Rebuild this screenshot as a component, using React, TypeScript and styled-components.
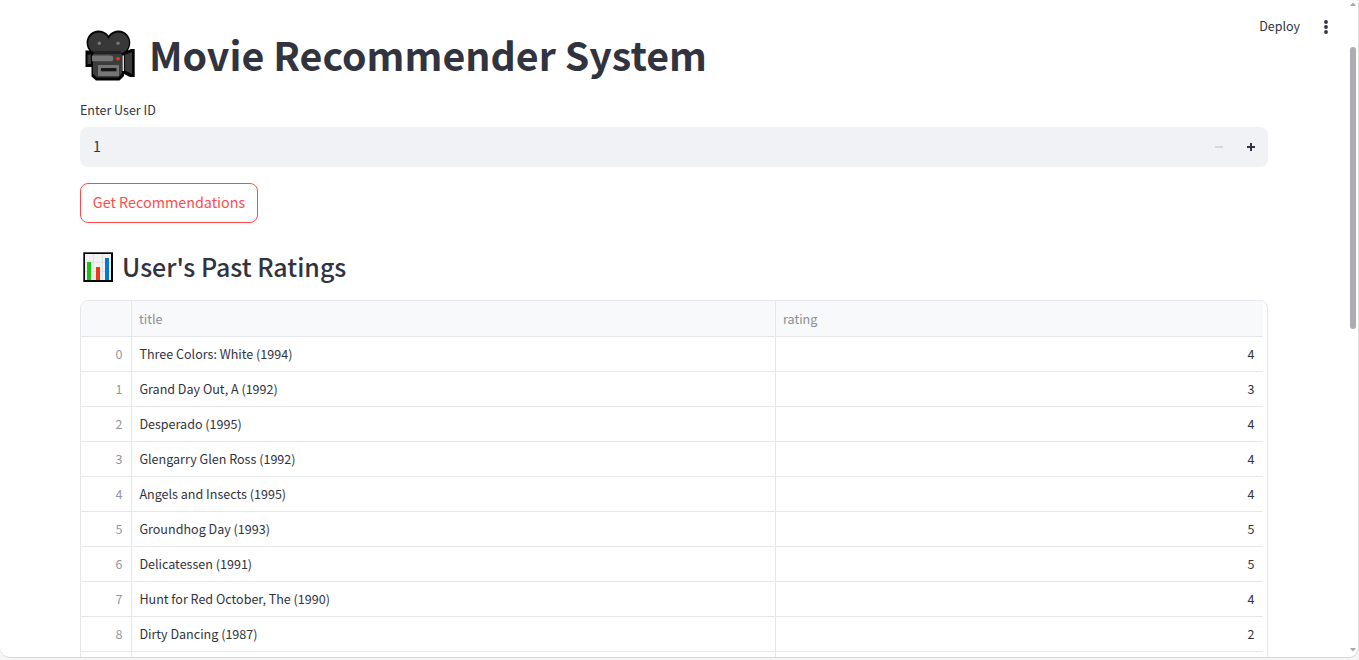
import React from "react";
import styled, { createGlobalStyle } from "styled-components";

const GlobalStyle = createGlobalStyle`
  *, *::before, *::after { box-sizing: border-box; }
  body {
    margin: 0;
    overflow: hidden;
    background: #f5f5f5;
    color: #31333f;
    font-family: "Noto Sans CJK SC", "Noto Sans", sans-serif;
  }
`;

const Frame = styled.div`
  position: relative;
  display: flex;
  justify-content: space-between;
  width: 1359px;
  height: 658px;
  overflow: hidden;
  background: #fff;
  border-right: 1px solid #dcdcdc;
  border-bottom: 1px solid #d6d6d6;
  border-radius: 0 4px 10px 10px;
`;

const Main = styled.main`
  width: 1268px;
  padding: 28px 0 0 80px;
`;

const Title = styled.h1`
  display: flex;
  align-items: center;
  height: 55px;
  margin: 0 0 17px;
  font-size: 39.35px;
  font-weight: 700;
  line-height: 52px;
  white-space: nowrap;
  svg { margin: 0 14px 0 5px; }
  span { padding-bottom: 3px; }
`;

const Label = styled.label`
  display: block;
  height: 27px;
  font-size: 12.5px;
  line-height: 20px;
`;

const NumberField = styled.div`
  display: flex;
  align-items: center;
  height: 40px;
  padding-left: 13px;
  border-radius: 8px;
  background: #f0f2f6;
  font-size: 14.2px;
  line-height: 20px;
  span { flex: 1; padding-bottom: 2px; }
`;

const StepButton = styled.button<{ $muted?: boolean }>`
  display: flex;
  align-items: center;
  justify-content: center;
  width: 32px;
  height: 40px;
  padding: 0;
  border: 0;
  background: none;
  color: ${(p) => (p.$muted ? "#d3d9e1" : "#31333f")};
  &:last-child { margin-right: 1px; }
`;

const ActionButton = styled.button`
  display: block;
  width: 178px;
  height: 40px;
  margin: 16px 0 17px;
  padding: 0 0 2px;
  border: 1px solid #ff4b4b;
  border-radius: 8px;
  background: #fff;
  color: #ff4b4b;
  font: 14.35px/36px "Noto Sans CJK SC", "Noto Sans", sans-serif;
  white-space: nowrap;
`;

const Subtitle = styled.h2`
  display: flex;
  align-items: center;
  height: 54px;
  margin: 0 0 6px;
  font-size: 24.95px;
  font-weight: 500;
  line-height: 52px;
  white-space: nowrap;
  svg { margin: 0 9px 0 3px; }
  span { padding-bottom: 2px; }
`;

const TableBox = styled.div`
  height: 400px;
  padding-right: 4px;
  overflow: hidden;
  border: 1px solid #e6e7ea;
  border-radius: 8px;
`;

const Cell = styled.div<{ $right?: boolean; $faded?: boolean }>`
  padding: 0 8.6px 0 7.4px;
  border-right: 1px solid #e6e7ea;
  text-align: ${(p) => (p.$right ? "right" : "left")};
  ${(p) => p.$faded && "color: #94969f;"}
  white-space: nowrap;
  &:last-child { border-right: 0; }
`;

const Row = styled.div<{ $head?: boolean }>`
  display: grid;
  grid-template-columns: 51px 644px 1fr;
  height: ${(p) => (p.$head ? 36 : 35)}px;
  border-bottom: 1px solid #e6e7ea;
  background: ${(p) => (p.$head ? "#f8f9fb" : "#fff")};
  color: ${(p) => (p.$head ? "#8b8d98" : "#31333f")};
  font-size: 12.55px;
  line-height: ${(p) => (p.$head ? 36 : 34)}px;
  ${Cell} { ${(p) => p.$head && "padding-left: 7px;"} }
`;

const Toolbar = styled.header`
  position: absolute;
  top: 12px;
  right: 24px;
  display: flex;
  align-items: center;
  gap: 18px;
  height: 30px;
  font-size: 12.5px;
  line-height: 28px;
  span { padding-bottom: 2px; }
`;

const Scrollbar = styled.div`
  display: flex;
  flex-direction: column;
  align-items: center;
  width: 8px;
  margin-right: 1px;
  padding: 2px 0 5px;
`;

const Thumb = styled.div`
  width: 6px;
  height: 282px;
  margin: 41px 0 auto;
  border-radius: 3px;
  background: #acacb2;
`;

const CameraIcon = () => (
  <svg width="50" height="51" viewBox="0 0 50 51" aria-hidden="true">
    <path
      d="M13.500 0.500C17 0.500 21 2 23.500 5.500C26 2 30 0.500 33.500 0.500C40 0.500 45.300 6 45.300 12.500C45.300 15.500 44.300 18 43 20.500L46 19H49.700V47H45L39 44V46L34.500 50.500H11L6.500 46.500V37H0.500V20.500H4.500C2.500 18.500 1.600 16 1.600 12.500C1.600 6 7 0.500 13.500 0.500Z"
      fill="#050505"
    />
    <circle cx="13.800" cy="13" r="10.600" fill="#383838" />
    <circle cx="33.500" cy="13" r="10.600" fill="#383838" />
    <path d="M13 16H34V23H13Z" fill="#383838" />
    <path d="M8 24H37V43L33.500 47.500H12L8 44Z" fill="#3c3c3c" />
    <path d="M10 21H36V24H8Z" fill="#222" />
    <path d="M2.500 24.500H6V34H2.500Z" fill="#3c3c3c" />
    <path d="M7 25.500H25.500A2.800 2.800 0 0 1 25.500 31.300H7Z" fill="#767676" />
    <path d="M13 35H34V46H13Z" fill="#767676" />
    <path d="M16 38H31.500V41.300H16Z" fill="#171717" />
    <path d="M37.500 25.500H39V41H37.500Z" fill="#ddd" />
    <path d="M40 25L47 22V44L40 40.500Z" fill="#3c3c3c" />
    <circle cx="14.300" cy="13.300" r="1.700" fill="#777" />
    <circle cx="33" cy="13.300" r="1.700" fill="#777" />
    <circle cx="33" cy="28.700" r="1.800" fill="#f33a1b" />
  </svg>
);

const ChartIcon = () => (
  <svg width="30" height="30" viewBox="0 0 30 30" aria-hidden="true">
    <path d="M0.300 0.300H30V30H0.300Z" fill="#050505" />
    <path d="M2 2H28V28H2Z" fill="#f2f2f2" />
    <path d="M2 10.500H28M2 19.500H28M10.500 2V28M19.500 2V28" stroke="#e2e2e2" />
    <path d="M4 10H8V28H4Z" fill="#17c60d" />
    <path d="M13 15H17V28H13Z" fill="#f03a17" />
    <path d="M22 6H26V28H22Z" fill="#0078d7" />
  </svg>
);

const ratings: [string, number][] = [
  ["Three Colors: White (1994)", 4],
  ["Grand Day Out, A (1992)", 3],
  ["Desperado (1995)", 4],
  ["Glengarry Glen Ross (1992)", 4],
  ["Angels and Insects (1995)", 4],
  ["Groundhog Day (1993)", 5],
  ["Delicatessen (1991)", 5],
  ["Hunt for Red October, The (1990)", 4],
  ["Dirty Dancing (1987)", 2],
];

export default function App() {
  return (
    <>
      <GlobalStyle />
      <Frame>
        <Main>
          <Title>
            <CameraIcon />
            <span>Movie Recommender System</span>
          </Title>
          <Label>Enter User ID</Label>
          <NumberField>
            <span>1</span>
            <StepButton $muted aria-label="Decrease">
              <svg width="8" height="8" viewBox="0 0 8 8">
                <path d="M0 3H8V5H0Z" fill="currentColor" />
              </svg>
            </StepButton>
            <StepButton aria-label="Increase">
              <svg width="8" height="8" viewBox="0 0 8 8">
                <path d="M0 3H3V0H5V3H8V5H5V8H3V5H0Z" fill="currentColor" />
              </svg>
            </StepButton>
          </NumberField>
          <ActionButton>Get Recommendations</ActionButton>
          <Subtitle>
            <ChartIcon />
            <span>User's Past Ratings</span>
          </Subtitle>
          <TableBox>
            <Row $head>
              <Cell />
              <Cell>title</Cell>
              <Cell>rating</Cell>
            </Row>
            {ratings.map(([title, rating], i) => (
              <Row key={title}>
                <Cell $right $faded>{i}</Cell>
                <Cell>{title}</Cell>
                <Cell $right>{rating}</Cell>
              </Row>
            ))}
            <Row>
              <Cell />
              <Cell />
              <Cell />
            </Row>
          </TableBox>
        </Main>
        <Toolbar>
          <span>Deploy</span>
          <svg width="16" height="16" viewBox="0 0 16 16" fill="#31333f">
            <circle cx="8" cy="3" r="1.9" />
            <circle cx="8" cy="8" r="1.9" />
            <circle cx="8" cy="13" r="1.9" />
          </svg>
        </Toolbar>
        <Scrollbar>
          <svg width="6" height="4" viewBox="0 0 6 4">
            <path d="M0 4L3 0.500L6 4Z" fill="#a6a6ab" />
          </svg>
          <Thumb />
          <svg width="6" height="4" viewBox="0 0 6 4">
            <path d="M0 0L3 3.500L6 0Z" fill="#a6a6ab" />
          </svg>
        </Scrollbar>
      </Frame>
    </>
  );
}
